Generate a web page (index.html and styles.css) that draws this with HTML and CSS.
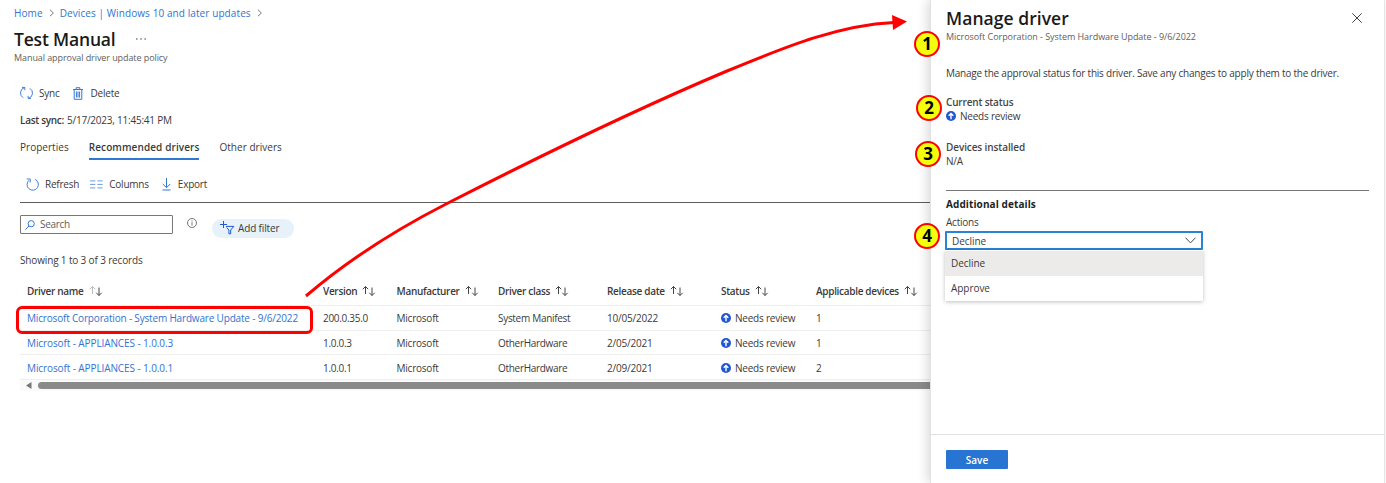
FILE: index.html
```html
<!DOCTYPE html>
<html lang="en">
<head>
<meta charset="utf-8">
<title>Manage driver</title>
<link rel="stylesheet" href="styles.css">
</head>
<body>
<svg class="defs" width="0" height="0">
  <symbol id="sort" viewBox="0 0 14 12"><path d="M3.5 9V1.5M.8 4.2l2.7-2.7 2.7 2.7M10 2.5v8M7.3 7.8l2.7 2.7 2.7-2.7"/></symbol>
  <symbol id="chev" viewBox="0 0 6 8"><path d="M1 .8 4.4 4 1 7.2"/></symbol>
  <symbol id="up" viewBox="0 0 10 10"><circle cx="5" cy="5" r="5" fill="#2156d4"/><path d="M5 8.2V2.6M2.7 4.7 5 2.4l2.3 2.3" fill="none" stroke="#fff" stroke-width="1.4"/></symbol>
</svg>
<div class="page">
  <main class="main">
    <nav class="crumbs"><a>Home</a><svg class="chev"><use href="#chev"/></svg><a>Devices | Windows 10 and later updates</a><svg class="chev"><use href="#chev"/></svg></nav>
    <div class="title-row"><h1 class="title">Test Manual</h1><svg class="more" viewBox="0 0 10 2"><path d="M0 1h1.6M4.2 1h1.6M8.4 1H10"/></svg></div>
    <div class="subtitle">Manual approval driver update policy</div>
    <div class="tools">
      <svg class="ic sync" viewBox="0 0 14 14"><path d="M5 1.2A5.9 5.9 0 0 0 3.4 12M9 12.8A5.9 5.9 0 0 0 10.6 2M2.2 1H5.2V4M11.8 13H8.8V10"/></svg><span>Sync</span>
      <svg class="ic trash" viewBox="0 0 10 13"><path d="M0 2.5h10M3.2 2.3V.7h3.6v1.6M1.2 2.5v9.8h7.6V2.5M3.4 4.5v6M5 4.5v6M6.6 4.5v6"/></svg><span>Delete</span>
    </div>
    <div class="last"><b>Last sync:</b><span>5/17/2023, 11:45:41 PM</span></div>
    <div class="tabs"><span class="tab">Properties</span><span class="tab on">Recommended drivers</span><span class="tab">Other drivers</span></div>
    <div class="cmds">
      <svg class="ic refresh" viewBox="0 0 14 14"><path d="M3.3 2.4A6.1 6.1 0 1 0 9.8 1.5M.8 1 4.6 1.1 4.5 4.9"/></svg><span>Refresh</span>
      <svg class="ic cols" viewBox="0 0 13 9"><path d="M0 .9h5.3M0 4.4h5.3M0 7.9h5.3M7.3.9h5.3M7.3 4.4h5.3M7.3 7.9h5.3"/></svg><span>Columns</span>
      <svg class="ic down" viewBox="0 0 9 13"><path d="M4.5 0v9.5M.7 5.9l3.8 3.8 3.8-3.8M.5 12h8"/></svg><span>Export</span>
    </div>
    <div class="filters">
      <div class="search"><svg class="lens" viewBox="0 0 10 10"><circle cx="6.2" cy="3.7" r="3.1"/><path d="M4 6 .5 9.5"/></svg><span class="lift">Search</span></div>
      <svg class="info" viewBox="0 0 10 10"><circle cx="5" cy="5" r="4.5"/><path d="M5 4.3v3.3M5 2.4v1.1"/></svg>
      <div class="pill"><svg class="funnel" viewBox="0 0 15 14"><path d="M0 3.5h7M3.5 0v7M6 5.4h7.8L10.7 9v3.8H8.9V9L6.6 6.5"/></svg><span class="lift add">Add filter</span></div>
    </div>
    <div class="count">Showing 1 to 3 of 3 records</div>
    <div class="row head"><span class="cell">Driver name<svg class="sort" viewBox="0 0 14 12"><path class="pale" d="M3.5 9V1.5M.8 4.2l2.7-2.7 2.7 2.7"/><path d="M10 2.5v8M7.3 7.8l2.7 2.7 2.7-2.7"/></svg></span><span class="cell">Version<svg class="sort"><use href="#sort"/></svg></span><span class="cell">Manufacturer<svg class="sort"><use href="#sort"/></svg></span><span class="cell">Driver class<svg class="sort"><use href="#sort"/></svg></span><span class="cell">Release date<svg class="sort"><use href="#sort"/></svg></span><span class="cell">Status<svg class="sort"><use href="#sort"/></svg></span><span class="cell">Applicable devices<svg class="sort"><use href="#sort"/></svg></span></div>
    <div class="row"><a class="long">Microsoft Corporation - System Hardware Update - 9/6/2022</a><span class="tight">200.0.35.0</span><span>Microsoft</span><span class="tight">System Manifest</span><span>10/05/2022</span><span class="cell"><svg class="up"><use href="#up"/></svg>Needs review</span><span>1</span></div>
    <div class="row"><a>Microsoft - APPLIANCES - 1.0.0.3</a><span class="tight">1.0.0.3</span><span>Microsoft</span><span class="tight">OtherHardware</span><span>2/05/2021</span><span class="cell"><svg class="up"><use href="#up"/></svg>Needs review</span><span>1</span></div>
    <div class="row"><a>Microsoft - APPLIANCES - 1.0.0.1</a><span class="tight">1.0.0.1</span><span>Microsoft</span><span class="tight">OtherHardware</span><span>2/09/2021</span><span class="cell"><svg class="up"><use href="#up"/></svg>Needs review</span><span>2</span></div>
    <div class="scroll"><svg class="tri" viewBox="0 0 6 7"><path d="M5.5 0v7L0 3.5z"/></svg><div class="thumb"></div></div>
  </main>
  <aside class="panel">
    <div class="p-body">
      <div class="p-top"><h2 class="title">Manage driver</h2><svg class="close" viewBox="0 0 10 10"><path d="M.3.3l9.4 9.4M9.7.3.3 9.7"/></svg></div>
      <div class="p-sub">Microsoft Corporation - System Hardware Update - 9/6/2022</div>
      <div class="p-desc">Manage the approval status for this driver. Save any changes to apply them to the driver.</div>
      <div class="p-label">Current status</div>
      <div class="p-value"><svg class="up"><use href="#up"/></svg><span>Needs review</span></div>
      <div class="p-label second">Devices installed</div>
      <div class="p-value">N/A</div>
      <div class="p-details">Additional details</div>
      <div class="p-actions">Actions</div>
      <div class="select"><span>Decline</span><svg class="caret" viewBox="0 0 11 7"><path d="M.5.7 5.5 5.9 10.5.7"/></svg></div>
      <div class="menu"><div class="opt sel">Decline</div><div class="opt">Approve</div></div>
    </div>
    <div class="p-foot"><button class="save">Save</button></div>
  </aside>
  <svg class="marks" viewBox="0 0 1386 483">
    <rect x="17.5" y="307.5" width="294" height="25" rx="4.5"/>
    <path d="M306 296C348 260 395 230 448 203C540 156 632 111 727 71C790 45 840 25 894 22.5"/>
    <path class="tip" d="M892 15 907 21.5 893 30z"/>
  </svg>
  <span class="badge b1">1</span><span class="badge b2">2</span><span class="badge b3">3</span><span class="badge b4">4</span>
</div>
</body>
</html>
```
FILE: styles.css
```css
* { box-sizing: border-box; }
body { margin: 0; background: #fff; color: #3b3a39; font: 10px/14px "Open Sans", "Noto Sans", sans-serif; letter-spacing: -.22px; overflow: hidden; }
svg { flex: none; fill: none; stroke: #444; stroke-width: 1; }
span, a { white-space: nowrap; }
.defs { position: absolute; }
.page { position: relative; display: flex; width: 1386px; height: 483px; overflow: hidden; }
.main { width: 930px; flex: none; padding-left: 20px; }
.crumbs, .title-row, .subtitle { display: flex; align-items: center; margin-left: -6px; }
.crumbs { height: 27px; color: #3273d0; letter-spacing: .09px; padding-bottom: 1px; }
.chev { width: 6px; height: 8px; stroke: #777; margin: 0 5px 0 6px; }
.title-row { height: 25px; padding-bottom: 2px; }
.title { margin: 0; font-size: 17.5px; line-height: 24px; font-weight: 600; color: #1b1a19; white-space: nowrap; letter-spacing: -.18px; }
.more { width: 10px; height: 2px; margin-left: 20px; stroke-width: 1.2; }
.subtitle { height: 12px; font-size: 9px; color: #605e5c; letter-spacing: -.08px; }
.tools { display: flex; align-items: center; height: 18px; margin-top: 20px; }
.ic { stroke: #3478d4; }
.sync { width: 13px; height: 14px; margin-right: 6px; }
.trash { width: 10px; height: 13px; margin: 0 8px 0 13px; }
.last { display: flex; gap: 3px; height: 19px; margin-top: 8px; align-items: center; }
.last b { font-weight: 600; letter-spacing: -.3px; }
.tabs { display: flex; gap: 20px; height: 22px; margin-top: 9px; letter-spacing: .03px; }
.tab { height: 22px; line-height: 19px; }
.on { font-weight: 600; border-bottom: 2px solid #2f78d3; letter-spacing: .1px; }
.cmds { display: flex; align-items: center; height: 43px; padding: 6px 0 0 6px; border-bottom: 1px solid #605e5c; }
.refresh { width: 13px; height: 13px; margin-right: 6px; }
.cols { width: 13px; height: 9px; margin: 0 6px 0 11px; stroke: #6a9ce2; }
.down { width: 9px; height: 13px; margin: 0 7px 0 13px; }
.filters { display: flex; height: 49px; padding-top: 12px; align-items: flex-start; }
.search { width: 153px; height: 19px; border: 1px solid #777; border-radius: 1px; display: flex; align-items: center; padding-left: 4px; color: #605e5c; letter-spacing: -.3px; }
.lift { padding-bottom: 2px; }
.add { letter-spacing: -.15px; }
.lens { width: 10px; height: 10px; margin-right: 5px; stroke: #3478d4; }
.info { width: 10px; height: 10px; margin: 3px 15px 0 14px; stroke: #666; stroke-width: .9; }
.pill { display: flex; align-items: center; width: 82px; height: 19px; margin-top: 4px; border-radius: 10px; background: #e6f1fa; padding-left: 8px; }
.funnel { width: 15px; height: 14px; margin: 0 3px 2px 0; stroke: #2156d4; }
.count { height: 26px; line-height: 17px; letter-spacing: -.15px; }
.row { display: grid; grid-template-columns: 296px 73.5px 101.5px 109px 114px 95px 1fr; align-items: center; height: 24.7px; padding: .6px 0 0 7px; border-bottom: 1px solid #eee; }
.head { height: 28px; font-weight: 600; padding: 0 0 2px 7px; letter-spacing: -.31px; }
.row a { color: #3273d0; letter-spacing: -.1px; }
.row .long { letter-spacing: -.175px; }
.tight { letter-spacing: -.3px; }
.cell { display: flex; align-items: center; }
.sort { width: 14px; height: 12px; margin-left: 5px; }
.pale { stroke: #bbb; }
.up { width: 10px; height: 10px; margin-right: 4px; stroke: none; }
.scroll { display: flex; align-items: center; height: 11px; padding-left: 6px; background: #fafafa; }
.tri { width: 6px; height: 7px; fill: #777; stroke: none; }
.thumb { flex: 1; height: 7px; margin-left: 6px; background: #8a8a8a; border-radius: 4px 0 0 4px; }
.panel { width: 455px; flex: none; background: #fff; border-left: 1px solid #e1e1e1; border-right: 1px solid #e5e5e5; box-shadow: -3px 0 10px rgba(0,0,0,.14); display: flex; flex-direction: column; z-index: 1; }
.p-body { height: 434px; flex: none; padding: 5px 15px 0 15px; }
.p-top { display: flex; justify-content: space-between; align-items: center; height: 25px; }
.p-top .title { letter-spacing: .05px; }
.close { width: 10px; height: 10px; margin-right: 7px; }
.p-sub { height: 13px; line-height: 13px; font-size: 9px; color: #605e5c; letter-spacing: -.05px; }
.p-desc { margin-top: 23px; }
.p-label { margin-top: 15px; font-weight: 600; color: #484644; letter-spacing: -.17px; }
.second { margin-top: 17px; letter-spacing: -.1px; }
.p-value { display: flex; align-items: center; height: 14px; }
.p-details { margin-top: 22px; border-top: 1px solid #777; padding-top: 6px; font-weight: 700; color: #201f1e; letter-spacing: .1px; }
.p-actions { margin-top: 3px; height: 17px; line-height: 16px; }
.select { display: flex; align-items: center; justify-content: space-between; width: 258px; height: 19px; margin-left: -1px; border: 2px solid #2b83d6; border-radius: 1px; padding: 0 5px; letter-spacing: -.05px; }
.caret { width: 11px; height: 7px; }
.menu { width: 258px; margin-left: -1px; padding-top: 1px; box-shadow: 0 1px 4px rgba(0,0,0,.25); letter-spacing: -.05px; }
.opt { height: 25px; line-height: 25px; padding-left: 6px; }
.sel { background: #edebe9; }
.p-foot { flex: 1; border-top: 1px solid #e1e1e1; padding: 15px 15px 0; }
.save { display: block; width: 62px; height: 19px; padding: 0; border: 0; border-radius: 1px; background: #2874d2; color: #fff; font: 600 10px/18px "Open Sans", sans-serif; }
.marks { position: absolute; left: 0; top: 0; width: 1386px; height: 483px; stroke: #f00; stroke-width: 3; z-index: 2; }
.tip { fill: #f00; stroke: none; }
.badge { position: absolute; z-index: 3; width: 26px; height: 26px; border: 2.5px solid #f00; border-radius: 50%; background: #f3ff0d; color: #000; font: 700 17px/21px "Open Sans", sans-serif; letter-spacing: 0; text-align: center; }
.b1 { left: 914px; top: 31px; }
.b2 { left: 916px; top: 95px; }
.b3 { left: 915px; top: 141px; }
.b4 { left: 914px; top: 223px; }
```
